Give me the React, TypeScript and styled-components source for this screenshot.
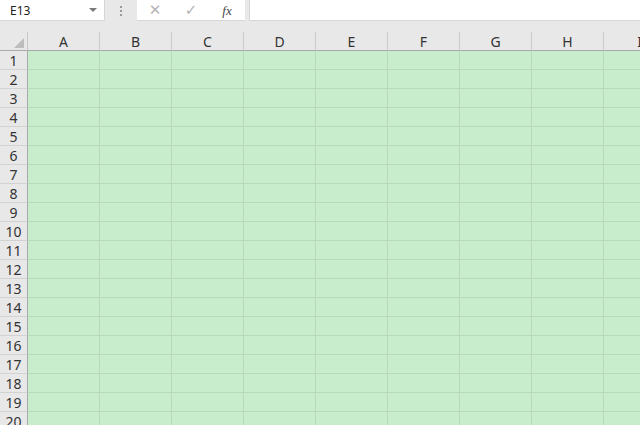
import React from "react";
import styled, { createGlobalStyle } from "styled-components";

const GlobalStyle = createGlobalStyle`
  html, body { margin: 0; padding: 0; overflow: hidden; background: #e8e8e8; }
  body { font-family: "Noto Sans", "Noto Sans CJK SC", sans-serif; }
`;

const Page = styled.div`
  width: 640px;
  height: 425px;
  overflow: hidden;
  display: flex;
  flex-direction: column;
  background: #e8e8e8;
`;

const FormulaBar = styled.div`
  height: 32px;
  flex: none;
  display: flex;
  align-items: flex-start;
  background: #e8e8e8;
`;

const NameBox = styled.div`
  width: 105px;
  height: 21px;
  box-sizing: border-box;
  background: #fff;
  border-right: 1px solid #d6d6d6;
  border-bottom: 1px solid #d6d6d6;
  display: flex;
  align-items: center;
  justify-content: space-between;
  padding: 0 6px 0 10px;
  font-size: 12px;
  color: #222;
`;

const DropArrow = styled.span`
  width: 0;
  height: 0;
  border-left: 4px solid transparent;
  border-right: 4px solid transparent;
  border-top: 4px solid #7a7a7a;
  margin-right: 1px;
`;

const Grip = styled.div`
  width: 32px;
  height: 21px;
  display: flex;
  flex-direction: column;
  align-items: center;
  justify-content: center;
  gap: 2px;
`;

const Dot = styled.span`
  width: 2px;
  height: 2px;
  background: #9a9a9a;
`;

const ButtonsBox = styled.div`
  width: 108px;
  height: 21px;
  box-sizing: border-box;
  background: #fff;
  border-bottom: 1px solid #d6d6d6;
  display: grid;
  grid-template-columns: repeat(3, 36px);
  align-items: center;
  justify-items: center;
`;

const Glyph = styled.span<{ $dark?: boolean }>`
  font-size: ${(p) => (p.$dark ? "13px" : "15px")};
  color: ${(p) => (p.$dark ? "#444" : "#b4b4b4")};
  font-family: ${(p) => (p.$dark ? '"Liberation Serif", serif' : '"DejaVu Sans", sans-serif')};
  font-style: ${(p) => (p.$dark ? "italic" : "normal")};
  line-height: 1;
`;

const FormulaInput = styled.div`
  flex: 1;
  margin-left: 4px;
  height: 21px;
  box-sizing: border-box;
  background: #fff;
  border-left: 1px solid #d6d6d6;
  border-bottom: 1px solid #d6d6d6;
`;

const Sheet = styled.div`
  display: grid;
  grid-template-columns: 28px repeat(9, 72px);
  grid-auto-rows: 19px;
  flex: none;
`;

const Corner = styled.div`
  position: relative;
  background: #e8e8e8;
  box-sizing: border-box;
  border-right: 1px solid #c8c8c8;
  border-bottom: 1px solid #a9a9a9;
`;

const CornerTriangle = styled.span`
  position: absolute;
  right: 3px;
  bottom: 2px;
  width: 0;
  height: 0;
  border-left: 10px solid transparent;
  border-bottom: 10px solid #bdbdbd;
`;

const ColHeader = styled.div`
  background: #e8e8e8;
  box-sizing: border-box;
  border-right: 1px solid #cbcbcb;
  border-bottom: 1px solid #a9a9a9;
  display: flex;
  align-items: center;
  justify-content: center;
  font-size: 14px;
  color: #333;
  padding-top: 1px;
`;

const RowHeader = styled.div`
  background: #e8e8e8;
  box-sizing: border-box;
  border-right: 1px solid #a9a9a9;
  border-bottom: 1px solid #d2d2d2;
  display: flex;
  align-items: center;
  justify-content: center;
  font-size: 14px;
  color: #333;
  padding-top: 1px;
`;

const Cell = styled.div`
  background: #c7edcc;
  box-sizing: border-box;
  border-right: 1px solid #b9d8be;
  border-bottom: 1px solid #b9d8be;
`;

const columns = ["A", "B", "C", "D", "E", "F", "G", "H", "I"];
const rows = Array.from({ length: 20 }, (_, i) => i + 1);

export default function App() {
  return (
    <>
      <GlobalStyle />
      <Page>
        <FormulaBar>
          <NameBox>
            <span>E13</span>
            <DropArrow />
          </NameBox>
          <Grip>
            <Dot />
            <Dot />
            <Dot />
          </Grip>
          <ButtonsBox>
            <Glyph>✕</Glyph>
            <Glyph>✓</Glyph>
            <Glyph $dark>fx</Glyph>
          </ButtonsBox>
          <FormulaInput />
        </FormulaBar>
        <Sheet>
          <Corner>
            <CornerTriangle />
          </Corner>
          {columns.map((c) => (
            <ColHeader key={c}>{c}</ColHeader>
          ))}
          {rows.map((r) => (
            <React.Fragment key={r}>
              <RowHeader>{r}</RowHeader>
              {columns.map((c) => (
                <Cell key={c} />
              ))}
            </React.Fragment>
          ))}
        </Sheet>
      </Page>
    </>
  );
}
